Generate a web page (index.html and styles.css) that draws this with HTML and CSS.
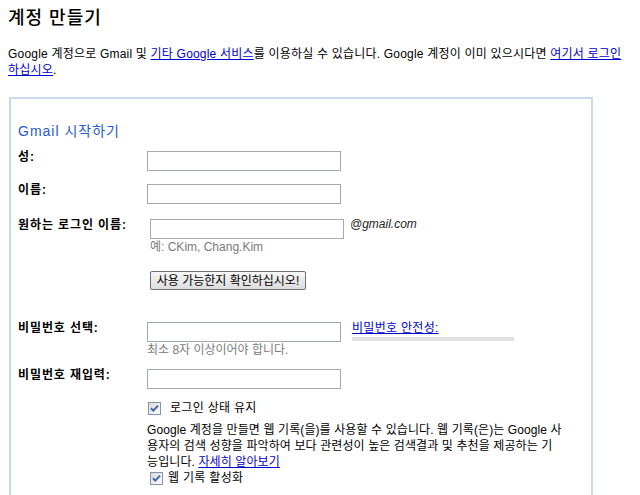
FILE: index.html
```html
<!DOCTYPE html>
<html lang="ko">
<head>
    <meta charset="UTF-8">
    <meta name="viewport" content="width=device-width, initial-scale=1.0">
    <title>계정 만들기</title>
    <link rel="stylesheet" href="styles.css">
</head>
<body>
    <h1 class="page-title">계정 만들기</h1>
    <p class="intro">Google 계정으로 Gmail 및 <a href="#">기타 Google 서비스</a>를 이용하실 수 있습니다. Google 계정이 이미 있으시다면 <a href="#">여기서 로그인하십시오</a>.</p>

    <div class="signup-box">
        <h2 class="box-title">Gmail 시작하기</h2>

        <div class="row row-first">
            <label class="row-label">성:</label>
            <div class="row-field"><input type="text" class="text-input"></div>
        </div>

        <div class="row row-name">
            <label class="row-label">이름:</label>
            <div class="row-field"><input type="text" class="text-input"></div>
        </div>

        <div class="row row-login">
            <label class="row-label">원하는 로그인 이름:</label>
            <div class="row-field shifted">
                <div class="inline-group">
                    <input type="text" class="text-input">
                    <span class="domain">@gmail.com</span>
                </div>
                <div class="hint">예: CKim, Chang.Kim</div>
                <button type="button" class="check-btn">사용 가능한지 확인하십시오!</button>
            </div>
        </div>

        <div class="row row-password">
            <label class="row-label">비밀번호 선택:</label>
            <div class="row-field">
                <div class="inline-group">
                    <input type="password" class="text-input">
                    <div class="strength">
                        <a href="#">비밀번호 안전성:</a>
                        <div class="strength-bar"></div>
                    </div>
                </div>
                <div class="hint">최소 8자 이상이어야 합니다.</div>
            </div>
        </div>

        <div class="row row-repeat">
            <label class="row-label">비밀번호 재입력:</label>
            <div class="row-field"><input type="password" class="text-input"></div>
        </div>

        <div class="extras">
            <div class="check-row check-stay">
                <span class="checkbox">
                    <svg width="13" height="13" viewBox="0 0 13 13"><path d="M3 6.2 L5.3 8.6 L10 3.6" fill="none" stroke="#4763a8" stroke-width="2"/></svg>
                </span>
                <span>로그인 상태 유지</span>
            </div>
            <p class="history-note">Google 계정을 만들면 웹 기록(을)를 사용할 수 있습니다. 웹 기록(은)는 Google 사용자의 검색 성향을 파악하여 보다 관련성이 높은 검색결과 및 추천을 제공하는 기능입니다. <a href="#">자세히 알아보기</a></p>
            <div class="check-row check-history">
                <span class="checkbox">
                    <svg width="13" height="13" viewBox="0 0 13 13"><path d="M3 6.2 L5.3 8.6 L10 3.6" fill="none" stroke="#4763a8" stroke-width="2"/></svg>
                </span>
                <span>웹 기록 활성화</span>
            </div>
        </div>
    </div>
</body>
</html>
```

FILE: styles.css
```css
/* Base page */
body {
    margin: 8px;
    font-family: "Liberation Sans", "Noto Sans CJK KR", sans-serif;
    font-size: 12px;
    color: #000;
    background: #fff;
}

a {
    color: #0000cc;
    text-decoration: underline;
}

/* Header */
.page-title {
    margin: 0;
    font-size: 18px;
    line-height: 20px;
    font-weight: 500;
    letter-spacing: 1px;
}

.intro {
    margin: 18px 0 0 0;
    line-height: 16px;
    letter-spacing: 0.2px;
}

/* Signup box */
.signup-box {
    margin: 19px 0 0 1px;
    width: 573px;
    border: 2px solid #c9d9ee;
    padding: 23px 0 30px 7px;
    box-sizing: content-box;
}

.box-title {
    margin: 0;
    font-size: 14px;
    line-height: 18px;
    font-weight: normal;
    letter-spacing: 1px;
    color: #2759cf;
}

/* Form rows */
.row {
    display: flex;
    align-items: flex-start;
}

.row-label {
    width: 129px;
    flex-shrink: 0;
    font-weight: bold;
    line-height: 13px;
    letter-spacing: 0.9px;
}

.row-first { margin-top: 11px; }
.row-name { margin-top: 13px; }
.row-login { margin-top: 15px; }
.row-password { margin-top: 32px; }
.row-repeat { margin-top: 11px; }

.shifted {
    margin-left: 3px;
}

.inline-group {
    display: flex;
    align-items: flex-start;
}

.text-input {
    width: 194px;
    height: 20px;
    margin: 0;
    padding: 0 2px;
    box-sizing: border-box;
    border: 1px solid #a5a9b0;
    font-family: inherit;
    font-size: 12px;
    background: #fff;
}

.domain {
    margin: -1px 0 0 6px;
    font-style: italic;
    line-height: 13px;
    color: #222;
}

.hint {
    margin-top: 1px;
    line-height: 15px;
    color: #7a7a7a;
}

.check-btn {
    display: block;
    margin-top: 16px;
    width: 156px;
    height: 19px;
    padding: 0;
    font-family: inherit;
    font-size: 12px;
    color: #000;
    border: 1px solid #707070;
    border-radius: 2px;
    background: linear-gradient(#f7f7f7, #dcdcdc);
    line-height: 16px;
}

/* Password strength */
.strength {
    margin-left: 11px;
    width: 162px;
}

.strength a {
    display: block;
    line-height: 13px;
    letter-spacing: 0.3px;
}

.strength-bar {
    margin-top: 2px;
    height: 4px;
    background: #e0e0e0;
}

/* Checkboxes and note */
.extras {
    margin-left: 129px;
}

.check-row {
    display: flex;
    align-items: center;
    line-height: 16px;
    letter-spacing: 0.3px;
}

.check-stay {
    margin-top: 11px;
    padding-left: 1px;
}

.check-stay .checkbox {
    margin-right: 9px;
}

.check-history {
    padding-left: 3px;
}

.check-history .checkbox {
    margin-right: 5px;
}

.checkbox {
    display: inline-block;
    width: 11px;
    height: 11px;
    border: 1px solid #8393b0;
    background: linear-gradient(135deg, #dcdcd6, #fbfbfb);
    position: relative;
}

.checkbox svg {
    position: absolute;
    left: -1px;
    top: -1px;
}

.history-note {
    margin: 6px 0 0 0;
    width: 415px;
    line-height: 16px;
    letter-spacing: 0.1px;
}
```
